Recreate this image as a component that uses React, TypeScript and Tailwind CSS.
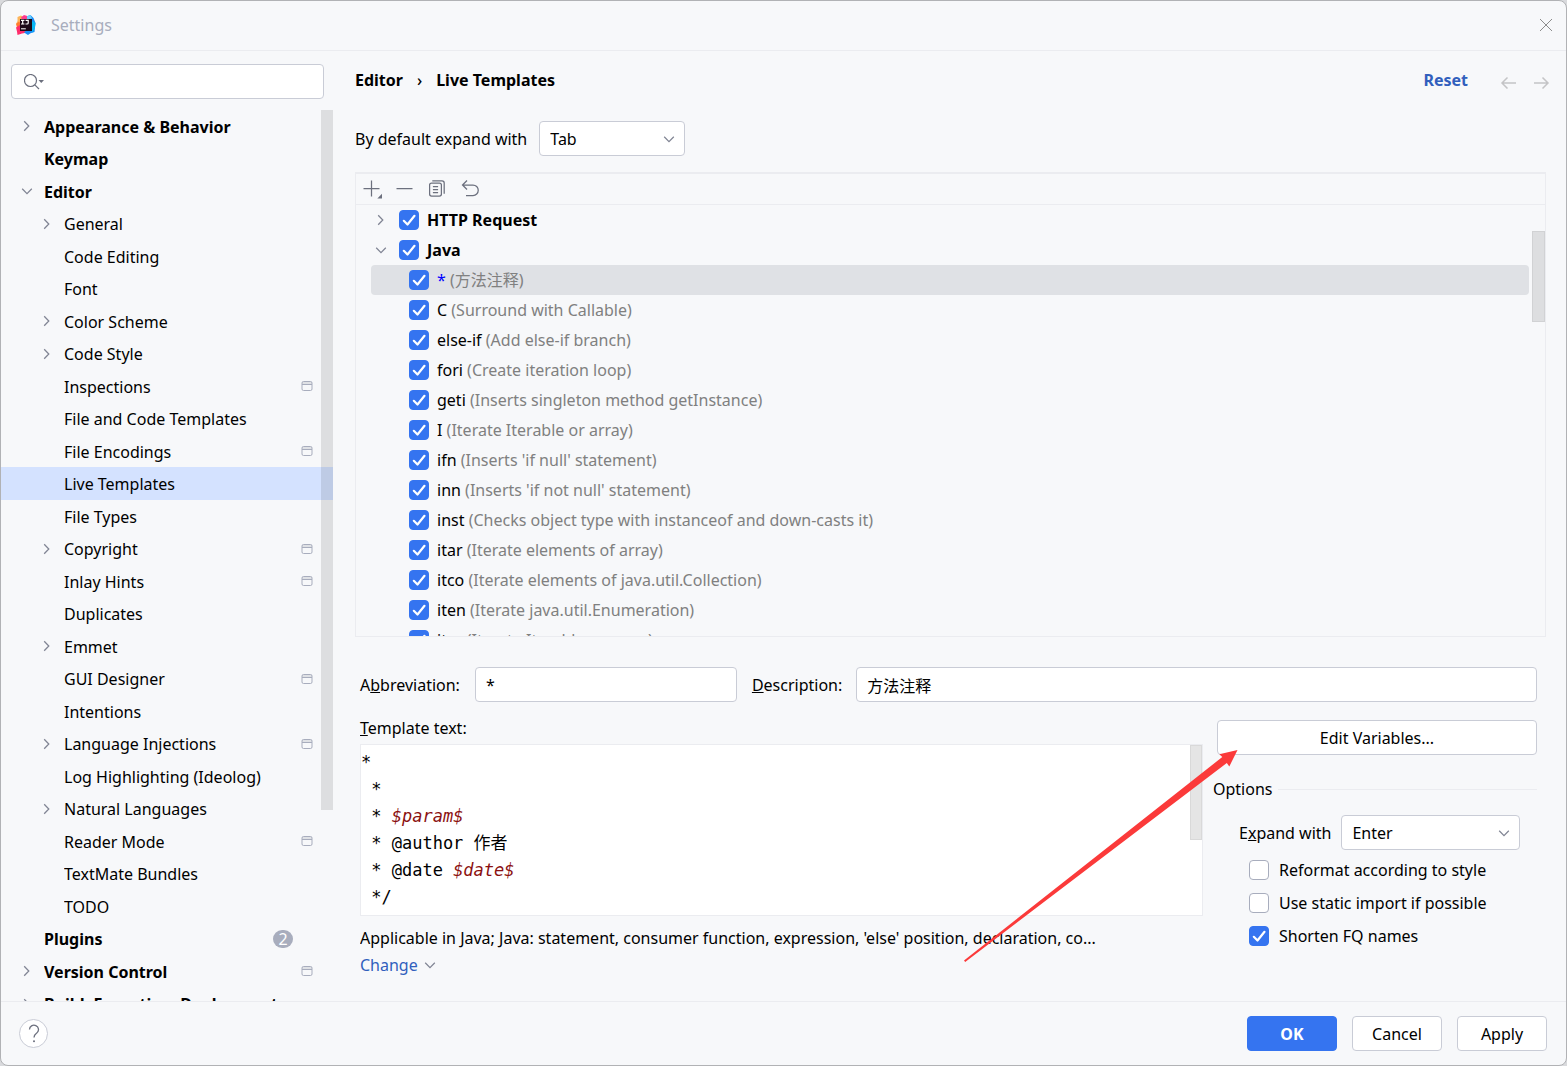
import { useState } from 'react';
import type { ReactNode } from 'react';
import clsx from 'clsx';

type NavItem = {
  label: string;
  top?: boolean;
  arrow?: 'right' | 'down';
  project?: boolean;
  badge?: number;
};

const navItems: NavItem[] = [
  { label: 'Appearance & Behavior', top: true, arrow: 'right' },
  { label: 'Keymap', top: true },
  { label: 'Editor', top: true, arrow: 'down' },
  { label: 'General', arrow: 'right' },
  { label: 'Code Editing' },
  { label: 'Font' },
  { label: 'Color Scheme', arrow: 'right' },
  { label: 'Code Style', arrow: 'right' },
  { label: 'Inspections', project: true },
  { label: 'File and Code Templates' },
  { label: 'File Encodings', project: true },
  { label: 'Live Templates' },
  { label: 'File Types' },
  { label: 'Copyright', arrow: 'right', project: true },
  { label: 'Inlay Hints', project: true },
  { label: 'Duplicates' },
  { label: 'Emmet', arrow: 'right' },
  { label: 'GUI Designer', project: true },
  { label: 'Intentions' },
  { label: 'Language Injections', arrow: 'right', project: true },
  { label: 'Log Highlighting (Ideolog)' },
  { label: 'Natural Languages', arrow: 'right' },
  { label: 'Reader Mode', project: true },
  { label: 'TextMate Bundles' },
  { label: 'TODO' },
  { label: 'Plugins', top: true, badge: 2 },
  { label: 'Version Control', top: true, arrow: 'right', project: true },
  { label: 'Build, Execution, Deployment', top: true, arrow: 'right' },
];

const javaTemplates = [
  { abbr: '*', desc: '方法注释', modified: true },
  { abbr: 'C', desc: 'Surround with Callable' },
  { abbr: 'else-if', desc: 'Add else-if branch' },
  { abbr: 'fori', desc: 'Create iteration loop' },
  { abbr: 'geti', desc: 'Inserts singleton method getInstance' },
  { abbr: 'I', desc: 'Iterate Iterable or array' },
  { abbr: 'ifn', desc: "Inserts 'if null' statement" },
  { abbr: 'inn', desc: "Inserts 'if not null' statement" },
  { abbr: 'inst', desc: 'Checks object type with instanceof and down-casts it' },
  { abbr: 'itar', desc: 'Iterate elements of array' },
  { abbr: 'itco', desc: 'Iterate elements of java.util.Collection' },
  { abbr: 'iten', desc: 'Iterate java.util.Enumeration' },
  { abbr: 'iter', desc: 'Iterate Iterable or array' },
];

const initialTemplate = ['*', ' *', ' * $param$', ' * @author 作者', ' * @date $date$', ' */'].join('\n');

function Chevron({ dir, className }: { dir: 'right' | 'down'; className?: string }) {
  return (
    <svg viewBox="0 0 12 12" className={clsx('size-3 fill-none stroke-[#818594]', className)} strokeWidth="1.25">
      {dir === 'right' ? <path d="M3.200 1.200 7.800 6l-4.600 4.800" /> : <path d="M1.200 3.800 6 8.600l4.800-4.800" />}
    </svg>
  );
}

function ProjectIcon() {
  return (
    <svg viewBox="0 0 12 12" className="size-3 fill-none stroke-[#a8adbd]">
      <path d="M1 4.500h10V2.500a1 1 0 0 0-1-1H2a1 1 0 0 0-1 1z" className="fill-[#dfe1e5] stroke-none" />
      <rect x="1" y="1.500" width="10" height="9" rx="1.500" />
      <path d="M1 4.500h10" />
    </svg>
  );
}

function Logo() {
  return (
    <svg viewBox="0 0 20 20" className="size-5">
      <path d="M1.500 2 5 .5 9 3v6H0L1.500 6z" fill="#fdb45b" />
      <path d="M0 9 3 6.500l3 4-1 5-4-3z" fill="#ff7a2f" />
      <path d="M5 2.500 8 0l4 1.200V6L8 8z" fill="#ff3a8c" />
      <path d="M0 12.500 4 10l7 5-2 3-3 .5L1.500 20 1 16.500z" fill="#ff2d6b" />
      <path d="M11 1.200 14.500 0l3 3 2 5-1 9-4 1.200-2.500 1.800-4-2.500L14 12z" fill="#1a8cf5" />
      <path d="M11 1.200 14.500 0l1.500 3.500-5 1z" fill="#6ad0ff" />
      <path d="M16 6l3.500 2-.700 5L16 18z" fill="#08b9f5" />
      <rect x="4" y="4" width="12" height="12" fill="#1c0a18" />
      <path d="M5 5.300h3.400M6.700 5v4M5 9h3.400M9.600 5.300h2.600v2.700q0 1-1 1H9.500" fill="none" stroke="#fff" strokeWidth="1.200" />
      <path d="M5 13.800h4.800" stroke="#fff" strokeWidth="1" />
    </svg>
  );
}

function CheckBox({ id, defaultChecked, label }: { id?: string; defaultChecked?: boolean; label?: string }) {
  return (
    <span className="grid size-5 shrink-0">
      <input
        id={id}
        type="checkbox"
        aria-label={label}
        defaultChecked={defaultChecked}
        className="peer col-start-1 row-start-1 size-5 appearance-none rounded-sm border border-[#a8adbd] bg-white checked:border-[#3574f0] checked:bg-[#3574f0]"
      />
      <svg
        viewBox="0 0 20 20"
        className="pointer-events-none invisible col-start-1 row-start-1 size-5 fill-none stroke-white peer-checked:visible"
        strokeWidth="2.200"
        strokeLinecap="round"
        strokeLinejoin="round"
      >
        <path d="m4.800 10.800 3.700 3.700 7-8.700" />
      </svg>
    </span>
  );
}

function SelectBox({ id, value, options, className }: { id: string; value: string; options: string[]; className: string }) {
  return (
    <span className={clsx('grid items-center', className)}>
      <select
        id={id}
        defaultValue={value}
        className="col-start-1 row-start-1 h-[35px] w-full appearance-none rounded border border-[#c9ccd6] bg-white px-2.5"
      >
        {options.map((option) => (
          <option key={option}>{option}</option>
        ))}
      </select>
      <Chevron dir="down" className="pointer-events-none col-start-1 row-start-1 mr-2.5 justify-self-end" />
    </span>
  );
}

function PushButton({ children, primary, className }: { children: ReactNode; primary?: boolean; className: string }) {
  return (
    <button
      type="button"
      className={clsx(
        'h-[35px] rounded border',
        primary ? 'border-[#3574f0] bg-[#3574f0] font-bold text-white' : 'border-[#c9ccd6] bg-white',
        className
      )}
    >
      {children}
    </button>
  );
}

function Sidebar() {
  const [selected, setSelected] = useState('Live Templates');

  return (
    <aside className="flex w-[332px] shrink-0 flex-col">
      <div className="mt-[13px] mr-[9px] ml-2.5 flex h-[35px] items-center rounded border border-[#c9ccd6] bg-white pl-3">
        <svg viewBox="0 0 20 16" className="h-4 w-5 shrink-0 fill-none stroke-[#6c707e]" strokeWidth="1.200">
          <circle cx="6.500" cy="6.500" r="6" />
          <path d="m10.800 10.800 4.200 4.200" />
          <path d="M14.500 6h5.500l-2.750 3z" className="fill-[#6c707e] stroke-none" />
        </svg>
        <input type="search" aria-label="Search settings" className="w-full bg-transparent px-2 outline-none" />
      </div>

      <nav className="relative mt-[11px] min-h-0 flex-1 overflow-hidden">
        <ul>
          {navItems.map((item) => (
            <li key={item.label} className="h-8 even:h-[33px]">
              <button
                type="button"
                onClick={() => setSelected(item.label)}
                className={clsx(
                  'flex h-full w-full items-center pr-5 text-left',
                  item.top ? 'pl-5 font-bold' : 'pl-10',
                  selected === item.label && 'bg-[#d4e2ff]'
                )}
              >
                <span className="w-[23px] shrink-0">{item.arrow && <Chevron dir={item.arrow} />}</span>
                <span className="flex-1 truncate pt-px">{item.label}</span>
                {item.badge && (
                  <span className="mr-5 flex h-[18px] w-5 items-center justify-center rounded-full bg-[#a8adbd] font-normal text-white">
                    {item.badge}
                  </span>
                )}
                {item.project && <ProjectIcon />}
              </button>
            </li>
          ))}
        </ul>
        <div className="absolute top-0 right-0 h-[700px] w-3 bg-black/10" />
      </nav>
    </aside>
  );
}

function TemplateList() {
  return (
    <section className="relative mt-4 flex min-h-0 flex-1 flex-col border border-t-2 border-[#ebecf0]">
      <div className="flex h-[31px] shrink-0 items-center gap-[13px] border-b border-[#ebecf0] pl-1.5">
        <button type="button" aria-label="Add">
          <svg viewBox="0 0 20 20" className="size-5 fill-none stroke-[#6c707e]" strokeWidth="1.250">
            <path d="M9.500 1.500v16M1.500 9.500h16" />
            <path d="M20 14.800v4.700h-4.700z" className="fill-[#6c707e] stroke-none" />
          </svg>
        </button>
        <button type="button" aria-label="Remove">
          <svg viewBox="0 0 20 20" className="size-5 fill-none stroke-[#6c707e]" strokeWidth="1.250">
            <path d="M1.500 9.500h16" />
          </svg>
        </button>
        <button type="button" aria-label="Duplicate">
          <svg viewBox="0 0 20 20" className="size-5 fill-none stroke-[#6c707e]" strokeWidth="1.250">
            <rect x="1.600" y="4" width="11.800" height="13" rx="2" />
            <path d="M4.300 1.800h9.700a2.200 2.200 0 0 1 2.200 2.200v10.800M4.900 7.500h5.200M4.900 10.500h5.200M4.900 13.500h5.200" />
          </svg>
        </button>
        <button type="button" aria-label="Revert">
          <svg viewBox="0 0 20 20" className="size-5 fill-none stroke-[#6c707e]" strokeWidth="1.250">
            <path d="M6 1.500 1.500 6 6 10.500M1.500 6h10.500a5 5 0 0 1 0 10.500H5" />
          </svg>
        </button>
      </div>

      <ul className="min-h-0 flex-1 overflow-hidden pr-4 pl-[15px]">
        <li className="flex h-[30px] items-center pl-1 font-bold">
          <Chevron dir="right" />
          <span className="mr-2 ml-3 flex">
            <CheckBox defaultChecked label="Enable HTTP Request" />
          </span>
          HTTP Request
        </li>
        <li className="flex h-[30px] items-center pl-1 font-bold">
          <Chevron dir="down" />
          <span className="mr-2 ml-3 flex">
            <CheckBox defaultChecked label="Enable Java" />
          </span>
          Java
        </li>
        {javaTemplates.map((template) => (
          <li
            key={template.abbr}
            className={clsx('flex h-[30px] items-center gap-2 rounded pl-[38px]', template.modified && 'bg-[#dfe1e5]')}
          >
            <CheckBox defaultChecked label={`Enable ${template.abbr}`} />
            <span>
              <span className={clsx(template.modified && 'text-[#0000ff]')}>{template.abbr}</span>{' '}
              <span className="text-[#808080]">({template.desc})</span>
            </span>
          </li>
        ))}
      </ul>
      <div className="absolute top-[57px] right-0 h-[91px] w-[13px] border border-black/5 bg-black/10" />
    </section>
  );
}

function TemplateEditor() {
  const [text, setText] = useState(initialTemplate);

  return (
    <div className="relative mt-1.5 grid h-[172px] border border-[#ebecf0] bg-white font-['DejaVu_Sans_Mono','Noto_Sans_CJK_SC',monospace] text-[17px] leading-[27px]">
      <pre aria-hidden="true" className="col-start-1 row-start-1 pt-1 font-[inherit]">
        {text.split(/(\$\w+\$)/).map((part, i) => (
          <span key={i} className={clsx(part.startsWith('$') && 'text-[#8b1010] italic')}>
            {part}
          </span>
        ))}
      </pre>
      {/* Transparent input layer, the highlighted text shows through */}
      <textarea
        id="template-text"
        value={text}
        spellCheck={false}
        onChange={(e) => setText(e.target.value)}
        className="col-start-1 row-start-1 resize-none overflow-hidden bg-transparent pt-1 text-transparent caret-black outline-none"
      />
      <div className="absolute top-0 right-0 h-[95px] w-3 border border-black/5 bg-black/10" />
    </div>
  );
}

export default function App() {
  return (
    <div className="h-screen bg-[#d9dadd] font-['Noto_Sans','Noto_Sans_CJK_SC',sans-serif] text-base leading-5 text-black">
      <div className="flex h-full flex-col overflow-hidden rounded-lg border border-[#b1b2b5] bg-[#f7f8fa]">
        <header className="flex h-[50px] shrink-0 items-center border-b border-[#ebecf0] pr-3.5 pb-px pl-[15px]">
          <Logo />
          <h1 className="ml-[15px] flex-1 text-[#a8adbd]">Settings</h1>
          <button type="button" aria-label="Close">
            <svg viewBox="0 0 12 12" className="size-3 stroke-[#8c8c8c]">
              <path d="m0 0 12 12M12 0 0 12" />
            </svg>
          </button>
        </header>

        <div className="flex min-h-0 flex-1">
          <Sidebar />

          <main className="flex min-w-0 flex-1 flex-col pr-5 pl-[22px]">
            <div className="mt-[19px] -mr-1 flex items-center font-bold">
              <span>Editor</span>
              <span className="mx-3.5 font-medium">›</span>
              <h2 className="flex-1">Live Templates</h2>
              <a href="#reset" className="text-[#315fbd]">
                Reset
              </a>
              <div className="ml-8 flex gap-3.5 pt-1">
                <button type="button" aria-label="Back">
                  <svg viewBox="0 0 18 14" className="h-3.5 w-[18px] fill-none stroke-[#c4c4c6]" strokeWidth="1.500">
                    <path d="M7.500 2.500 2 8l5.500 5.500M2 8h14" />
                  </svg>
                </button>
                <button type="button" aria-label="Forward">
                  <svg viewBox="0 0 18 14" className="h-3.5 w-[18px] fill-none stroke-[#c4c4c6]" strokeWidth="1.500">
                    <path d="M10.500 2.500 16 8l-5.500 5.500M16 8H2" />
                  </svg>
                </button>
              </div>
            </div>

            <div className="mt-[31px] flex items-center gap-3">
              <label htmlFor="default-expand">By default expand with</label>
              <SelectBox id="default-expand" value="Tab" options={['Tab', 'Enter', 'Space']} className="w-[146px]" />
            </div>

            <TemplateList />

            <section className="relative mt-[30px] h-[334px] shrink-0 pr-[9px] pl-[5px]">
              <div className="flex items-center">
                <label htmlFor="abbreviation">
                  A<u>b</u>breviation:
                </label>
                <input
                  id="abbreviation"
                  defaultValue="*"
                  className="mx-[15px] h-[35px] w-[262px] rounded border border-[#c9ccd6] bg-white px-2.5"
                />
                <label htmlFor="description">
                  <u>D</u>escription:
                </label>
                <input
                  id="description"
                  defaultValue="方法注释"
                  className="ml-3.5 h-[35px] min-w-0 flex-1 rounded border border-[#c9ccd6] bg-white px-2.5"
                />
              </div>

              <div className="mt-4 flex gap-3.5">
                <div className="min-w-0 flex-1">
                  <label htmlFor="template-text" className="block">
                    <u>T</u>emplate text:
                  </label>
                  <TemplateEditor />
                  <p className="mt-3 truncate pr-20">
                    Applicable in Java; Java: statement, consumer function, expression, 'else' position, declaration, co...
                  </p>
                  <button type="button" className="mt-[7px] flex items-center gap-1.5 text-[#315fbd]">
                    Change
                    <Chevron dir="down" />
                  </button>
                </div>

                <div className="w-80 shrink-0 pt-0.5">
                  <PushButton className="w-full">Edit Variables...</PushButton>
                  <fieldset className="-mr-1 mt-6">
                    <legend className="-ml-1 flex w-full items-center gap-1.5">
                      Options
                      <span className="h-px flex-1 bg-[#ebecf0]" />
                    </legend>
                    <div className="mt-4 flex items-center gap-2.5 pl-[22px]">
                      <label htmlFor="expand-with">
                        E<u>x</u>pand with
                      </label>
                      <SelectBox id="expand-with" value="Enter" options={['Enter', 'Tab', 'Space', 'None']} className="w-[179px]" />
                    </div>
                    <div className="mt-2.5 flex flex-col gap-[13px] pl-8">
                      <label className="flex items-center gap-2.5">
                        <CheckBox />
                        Reformat according to style
                      </label>
                      <label className="flex items-center gap-2.5">
                        <CheckBox />
                        Use static import if possible
                      </label>
                      <label className="flex items-center gap-2.5">
                        <CheckBox defaultChecked />
                        Shorten FQ names
                      </label>
                    </div>
                  </fieldset>
                </div>
              </div>

              {/* Callout arrow pointing at Edit Variables */}
              <svg viewBox="0 0 274 212" className="pointer-events-none absolute top-[83px] right-[308px] h-[212px] w-[274px] fill-[#fb3a3a]">
                <path d="M273.500 0 255.300 4.300 258.300 7 0 210.500 1.200 212 262.800 13 265.300 16.500z" />
              </svg>
            </section>
          </main>
        </div>

        <footer className="flex h-16 shrink-0 items-center gap-[15px] border-t border-[#ebecf0] pr-[19px] pl-[18px]">
          <button
            type="button"
            aria-label="Help"
            className="mr-auto flex size-[29px] items-center justify-center rounded-full border border-[#c9ccd6] bg-white"
          >
            <svg viewBox="0 0 12 20" className="h-5 w-3 fill-none stroke-[#6c707e]" strokeWidth="1.300">
              <path d="M1.500 5.500a4.500 4.300 0 1 1 7.500 3.200C7.300 10 6 10.800 6 13.500" />
              <circle cx="6" cy="17.300" r="1" className="fill-[#6c707e] stroke-none" />
            </svg>
          </button>
          <PushButton primary className="w-[90px]">OK</PushButton>
          <PushButton className="w-[90px]">Cancel</PushButton>
          <PushButton className="w-[90px]">Apply</PushButton>
        </footer>
      </div>
    </div>
  );
}
